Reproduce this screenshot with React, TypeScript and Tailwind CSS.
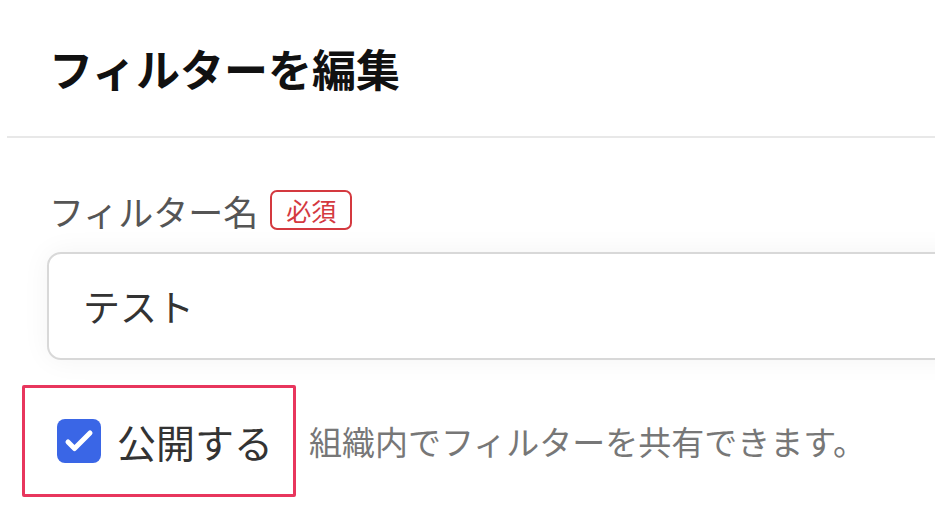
export default function App() {
  return (
    <div
      className="h-[528px] w-[948px] overflow-hidden bg-white"
      style={{ fontFamily: '"Noto Sans CJK JP", "Noto Sans", sans-serif' }}
    >
      <div className="ml-[7px] w-[928px] overflow-hidden">
        {/* header */}
        <div className="flex h-[138px] items-center border-b-2 border-[#e8e8e8] pl-[42px]">
          <h1 className="text-[44px] leading-none font-bold text-[#111]">フィルターを編集</h1>
        </div>

        {/* body */}
        <div className="px-[15px]">
          <div className="mt-[52px] ml-[27px] flex h-[40px] items-center gap-[12px]">
            <span className="text-[35px] leading-none text-[#555]">フィルター名</span>
            <span className="flex h-[40px] items-center rounded-[7px] border-2 border-[#d4393f] px-[14px] text-[25px] leading-none text-[#d4393f]">
              必須
            </span>
          </div>

          <div className="mt-[22px] ml-[25px] flex h-[108px] w-[1000px] items-center rounded-[14px] border-2 border-[#d8d8d8] bg-white pl-[34px] shadow-[0_0_28px_rgba(0,0,0,0.05)]">
            <span className="text-[37px] leading-none text-[#333]">テスト</span>
          </div>

          <div className="mt-[25px] flex items-center">
            <label className="flex h-[112px] items-center gap-[16px] rounded-[2px] border-[3px] border-[#e8365d] pr-[20px] pl-[32px]">
              <span className="flex h-[44px] w-[44px] items-center justify-center rounded-[8px] bg-[#3a66e6]">
                <svg width="44" height="44" viewBox="0 0 44 44" fill="none">
                  <path
                    d="M11 23 L17.5 29.5 L33 14"
                    stroke="white"
                    strokeWidth="5"
                    strokeLinecap="round"
                    strokeLinejoin="round"
                  />
                </svg>
              </span>
              <span className="text-[39px] leading-none text-[#333]">公開する</span>
            </label>
            <span className="ml-[13px] text-[33px] leading-none text-[#777]">
              組織内でフィルターを共有できます。
            </span>
          </div>
        </div>
      </div>
    </div>
  );
}
